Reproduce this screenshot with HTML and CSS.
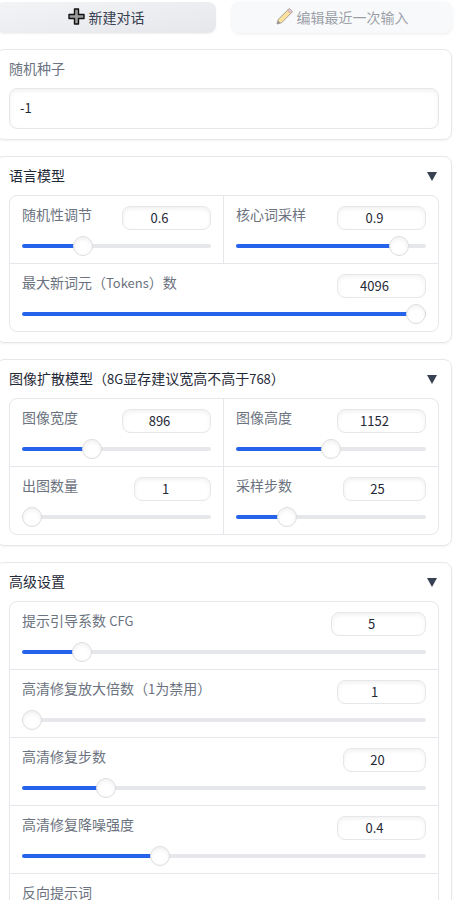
FILE: index.html
```html
<!DOCTYPE html>
<html lang="zh-CN">
<head>
<meta charset="utf-8">
<meta name="viewport" content="width=device-width, initial-scale=1">
<title>设置</title>
<link rel="stylesheet" href="styles.css">
</head>
<body>
<main class="settings">
  <div class="actions">
    <button class="action" type="button">
      <svg class="icon" viewBox="0 0 17 17" aria-hidden="true"><path d="M6.500 1h4v5.500H16v4h-5.500V16h-4v-5.500H1v-4h5.500z" fill="#9b9b9b" stroke="#111" stroke-width="1.400" stroke-linejoin="round"/></svg>
      <span>新建对话</span>
    </button>
    <button class="action" type="button" disabled>
      <svg class="icon" viewBox="0 0 17 17" aria-hidden="true"><path d="M1 16l1.200-4.500L12.300 1.500q.8-.8 1.700-.5l2 2q.3.900-.5 1.700L5.500 14.800z" fill="#f8c83c" stroke="#4a4030" stroke-linejoin="round"/><path d="M11.500 2.300l.8-.8q.8-.8 1.700-.5l2 2q.3.900-.5 1.700l-.8.800z" fill="#e79191" stroke="#6b5555"/><path d="M1 16l1-3.500 2.500 2.500z" fill="#333"/></svg>
      <span>编辑最近一次输入</span>
    </button>
  </div>

  <section class="panel">
    <label class="label" for="seed">随机种子</label>
    <input class="text" id="seed" type="text" value="-1">
  </section>

  <section class="panel">
    <button class="title" type="button" aria-expanded="true"><span>语言模型</span><svg class="arrow" viewBox="0 0 10 9" aria-hidden="true"><path d="M0 0h10L5 9z"/></svg></button>
    <div class="grid">
      <div class="cell">
        <div class="head"><label class="label" for="temp">随机性调节</label><input class="number w89" id="temp" type="number" min="0" max="2" step="0.1" value="0.6"></div>
        <input class="slider" type="range" aria-labelledby="temp" min="0" max="2" step="0.1" value="0.6" style="--fill:30%">
      </div>
      <div class="cell">
        <div class="head"><label class="label" for="topp">核心词采样</label><input class="number w89" id="topp" type="number" min="0" max="1" step="0.1" value="0.9"></div>
        <input class="slider" type="range" aria-labelledby="topp" min="0" max="1" step="0.1" value="0.9" style="--fill:90%">
      </div>
      <div class="cell wide">
        <div class="head"><label class="label" for="tokens">最大新词元（<span class="latin">Tokens</span>）数</label><input class="number w89" id="tokens" type="number" min="64" max="4096" value="4096"></div>
        <input class="slider" type="range" aria-labelledby="tokens" min="64" max="4096" value="4096" style="--fill:100%">
      </div>
    </div>
  </section>

  <section class="panel">
    <button class="title" type="button" aria-expanded="true"><span>图像扩散模型（<span class="latin">8G</span>显存建议宽高不高于<span class="latin">768</span>）</span><svg class="arrow" viewBox="0 0 10 9" aria-hidden="true"><path d="M0 0h10L5 9z"/></svg></button>
    <div class="grid">
      <div class="cell">
        <div class="head"><label class="label" for="width">图像宽度</label><input class="number w89" id="width" type="number" min="256" max="2048" step="64" value="896"></div>
        <input class="slider" type="range" aria-labelledby="width" min="256" max="2048" step="64" value="896" style="--fill:36%">
      </div>
      <div class="cell">
        <div class="head"><label class="label" for="height">图像高度</label><input class="number w89" id="height" type="number" min="256" max="2048" step="64" value="1152"></div>
        <input class="slider" type="range" aria-labelledby="height" min="256" max="2048" step="64" value="1152" style="--fill:50%">
      </div>
      <div class="cell">
        <div class="head"><label class="label" for="count">出图数量</label><input class="number w77" id="count" type="number" min="1" max="9" value="1"></div>
        <input class="slider" type="range" aria-labelledby="count" min="1" max="9" value="1" style="--fill:0%">
      </div>
      <div class="cell">
        <div class="head"><label class="label" for="steps">采样步数</label><input class="number w83" id="steps" type="number" min="1" max="100" value="25"></div>
        <input class="slider" type="range" aria-labelledby="steps" min="1" max="100" value="25" style="--fill:24%">
      </div>
    </div>
  </section>

  <section class="panel">
    <button class="title" type="button" aria-expanded="true"><span>高级设置</span><svg class="arrow" viewBox="0 0 10 9" aria-hidden="true"><path d="M0 0h10L5 9z"/></svg></button>
    <div class="grid">
      <div class="cell wide">
        <div class="head"><label class="label" for="cfg">提示引导系数 <span class="latin">CFG</span></label><input class="number w95" id="cfg" type="number" min="1" max="32" value="5"></div>
        <input class="slider" type="range" aria-labelledby="cfg" min="1" max="32" value="5" style="--fill:13%">
      </div>
      <div class="cell wide">
        <div class="head"><label class="label" for="scale">高清修复放大倍数（<span class="latin">1</span>为禁用）</label><input class="number w89" id="scale" type="number" min="1" max="2" step="0.1" value="1"></div>
        <input class="slider" type="range" aria-labelledby="scale" min="1" max="2" step="0.1" value="1" style="--fill:0%">
      </div>
      <div class="cell wide">
        <div class="head"><label class="label" for="hrsteps">高清修复步数</label><input class="number w83" id="hrsteps" type="number" min="1" max="100" value="20"></div>
        <input class="slider" type="range" aria-labelledby="hrsteps" min="1" max="100" value="20" style="--fill:19%">
      </div>
      <div class="cell wide">
        <div class="head"><label class="label" for="denoise">高清修复降噪强度</label><input class="number w89" id="denoise" type="number" min="0.1" max="1" step="0.1" value="0.4"></div>
        <input class="slider" type="range" aria-labelledby="denoise" min="0.1" max="1" step="0.1" value="0.4" style="--fill:33%">
      </div>
      <div class="cell wide">
        <label class="label" for="negative">反向提示词</label>
        <textarea class="text" id="negative" rows="2"></textarea>
      </div>
    </div>
  </section>
</main>
</body>
</html>
```

FILE: styles.css
```css
:root {
  --line: #e5e7eb;
  --ink: #1f2937;
  --muted: #6b7280;
  --accent: #2563eb;
  --inset: inset 0 2px 4px rgba(0, 0, 0, 0.06);
}

* { box-sizing: border-box; }

body {
  height: 100vh;
  margin: 0;
  overflow: hidden;
  background: #fff;
  color: var(--ink);
  font: 14px/16px "Noto Sans CJK SC", sans-serif;
}

button, input, textarea {
  margin: 0;
  color: inherit;
  font: inherit;
}

.settings {
  display: flex;
  flex-direction: column;
  gap: 16px;
  margin: 2px 11px 0 -4px;
}

.actions {
  display: grid;
  grid-template-columns: 1fr 1fr;
  gap: 16px;
}

.action {
  display: flex;
  align-items: center;
  justify-content: center;
  gap: 4px;
  height: 31px;
  padding: 0 0 2px;
  border: 0;
  border-radius: 8px;
  background: linear-gradient(to bottom right, #f3f4f6, #e5e7eb);
  box-shadow: 0 1px 2px rgba(0, 0, 0, 0.06);
  color: #374151;
}

.action:disabled {
  background: #f3f4f6;
  box-shadow: 0 1px 3px rgba(0, 0, 0, 0.14);
  opacity: 0.5;
}

.icon {
  width: 17px;
  height: 17px;
}

.panel {
  display: flex;
  flex-direction: column;
  gap: 12px;
  padding: 10px 12px;
  border: 1px solid var(--line);
  border-radius: 8px;
  box-shadow: 0 1px 2px rgba(0, 0, 0, 0.05);
}

.label {
  display: block;
  color: var(--muted);
}

.latin {
  font-size: 13px;
  line-height: 1;
}

.text {
  display: block;
  width: 100%;
  height: 41px;
  padding: 9px 10px 11px;
  border: 1px solid var(--line);
  border-radius: 8px;
  background: #fff;
  box-shadow: var(--inset);
  font-size: 13px;
}

textarea.text {
  height: 60px;
  margin-top: 8px;
}

.title {
  display: flex;
  align-items: center;
  justify-content: space-between;
  height: 16px;
  padding: 0 2px 0 0;
  border: 0;
  background: none;
  color: #1f2937;
  text-align: left;
}

.arrow {
  width: 10px;
  height: 9px;
  margin-top: 2px;
  fill: #374151;
}

.grid {
  display: grid;
  grid-template-columns: 1fr 1fr;
  row-gap: 1px;
  overflow: hidden;
  border: 1px solid var(--line);
  border-radius: 8px;
  background: var(--line);
}

.cell {
  padding: 10px 12px 7px;
  background: #fff;
}

.cell:not(.wide):nth-child(odd) { border-right: 1px solid var(--line); }

.wide { grid-column: 1 / -1; }

.head {
  display: flex;
  align-items: flex-start;
  justify-content: space-between;
}

.number {
  height: 24px;
  padding: 0 14px 2px 0;
  border: 1px solid var(--line);
  border-radius: 8px;
  background: #fff;
  box-shadow: var(--inset);
  font-size: 13px;
  text-align: center;
  appearance: textfield;
}

.number::-webkit-inner-spin-button { display: none; }

.w77 { width: 77px; }
.w83 { width: 83px; }
.w89 { width: 89px; }
.w95 { width: 95px; }

.slider {
  display: block;
  width: 100%;
  height: 20px;
  margin-top: 6px;
  background: none;
  appearance: none;
}

.slider::-webkit-slider-runnable-track {
  height: 4px;
  border-radius: 2px;
  background: linear-gradient(to right, var(--accent) var(--fill), var(--line) var(--fill));
}

.slider::-webkit-slider-thumb {
  width: 20px;
  height: 20px;
  margin-top: -8px;
  border: 1px solid #dcdcde;
  border-radius: 50%;
  background: #fff;
  box-shadow: var(--inset);
  appearance: none;
}
```
